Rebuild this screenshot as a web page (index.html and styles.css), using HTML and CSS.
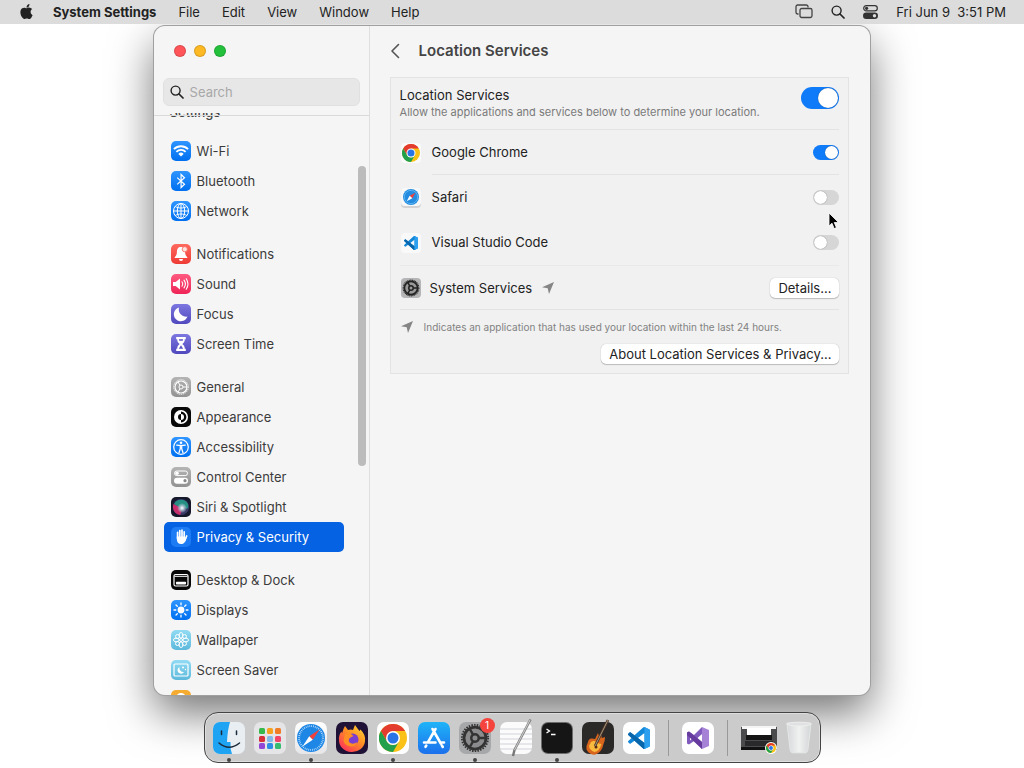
FILE: index.html
```html
<!DOCTYPE html>
<html lang="en">
<head>
<meta charset="utf-8">
<title>System Settings</title>
<link rel="stylesheet" href="styles.css">
</head>
<body>
<svg class="defs" aria-hidden="true">
  <defs>
    <linearGradient id="g-blue" x2="0" y2="1"><stop stop-color="#2f95ff"/><stop offset="1" stop-color="#0070f0"/></linearGradient>
    <linearGradient id="g-red" x2="0" y2="1"><stop stop-color="#ff6a5e"/><stop offset="1" stop-color="#ee3a35"/></linearGradient>
    <linearGradient id="g-pink" x2="0" y2="1"><stop stop-color="#ff5a80"/><stop offset="1" stop-color="#ee2456"/></linearGradient>
    <linearGradient id="g-violet" x2="0" y2="1"><stop stop-color="#7c77e0"/><stop offset="1" stop-color="#5048bd"/></linearGradient>
    <linearGradient id="g-gray" x2="0" y2="1"><stop stop-color="#b4b4b4"/><stop offset="1" stop-color="#929292"/></linearGradient>
    <linearGradient id="g-cyan" x2="0" y2="1"><stop stop-color="#92dbf3"/><stop offset="1" stop-color="#5db9dc"/></linearGradient>
    <linearGradient id="g-white" x2="0" y2="1"><stop stop-color="#ffffff"/><stop offset="1" stop-color="#e6e6e8"/></linearGradient>
    <linearGradient id="g-store" x2="0" y2="1"><stop stop-color="#1fb4f8"/><stop offset="1" stop-color="#1c70ec"/></linearGradient>
    <linearGradient id="g-flame" x1="1" x2="0.2" y2="1"><stop stop-color="#ffe23c"/><stop offset=".45" stop-color="#ff9422"/><stop offset="1" stop-color="#ff2f5b"/></linearGradient>
    <linearGradient id="g-vs" x2="1" y2="0"><stop stop-color="#6b3fa8"/><stop offset="1" stop-color="#b48ae2"/></linearGradient>
    <linearGradient id="g-trash" x2="1" y2="0"><stop stop-color="#d5d8d9"/><stop offset=".5" stop-color="#f0f1f1"/><stop offset="1" stop-color="#d2d5d6"/></linearGradient>
    <radialGradient id="g-siri"><stop stop-color="#ffffff"/><stop offset=".35" stop-color="#b7c8d6"/><stop offset="1" stop-color="#b7c8d6" stop-opacity="0"/></radialGradient>

    <symbol id="chrome" viewBox="0 0 24 24">
      <circle cx="12" cy="12" r="12" fill="#fbc116"/>
      <path d="M12 12 6.8 15 1.6 6A12 12 0 0 1 22.4 6H12Z" fill="#e33b2e"/>
      <path d="M1.6 6 6.8 15a6 6 0 0 0 10.4 0L12 24A12 12 0 0 1 1.6 6Z" fill="#22a04b"/>
      <circle cx="12" cy="12" r="6" fill="#fff"/><circle cx="12" cy="12" r="4.7" fill="#2a74e6"/>
    </symbol>
    <symbol id="compass" viewBox="0 0 24 24">
      <circle cx="12" cy="12" r="12" fill="#1e87e5"/>
      <circle cx="12" cy="12" r="10.2" fill="none" stroke="#d5ecff" stroke-width="1.6" stroke-dasharray=".6 1"/>
      <path d="m19.5 4.5-9 6 3 3Z" fill="#f0403c"/><path d="m4.500 19.500 9-6-3-3Z" fill="#fff"/>
    </symbol>
    <symbol id="compass-small" viewBox="0 0 24 24">
      <circle cx="12" cy="12" r="12" fill="#238ce0"/>
      <circle cx="12" cy="12" r="10" fill="none" stroke="#5bb2ef" stroke-width="1.500"/>
      <path d="m18.500 5.500-8.500 4.500 4 4Z" fill="#f0403c"/><path d="m5.500 18.500 8.500-4.500-4-4Z" fill="#fff"/>
    </symbol>
    <symbol id="vscode" viewBox="0 0 24 24">
      <path fill="#1287d8" d="M23.15 2.587 18.21.21a1.494 1.494 0 0 0-1.705.29l-9.46 8.63-4.12-3.128a.999.999 0 0 0-1.276.057L.327 7.261A1 1 0 0 0 .326 8.74L3.899 12 .326 15.26a1 1 0 0 0 .001 1.479L1.65 17.94a.999.999 0 0 0 1.276.057l4.12-3.128 9.46 8.63a1.492 1.492 0 0 0 1.704.29l4.942-2.377A1.5 1.5 0 0 0 24 20.06V3.939a1.5 1.5 0 0 0-.85-1.352zm-5.146 14.861L10.826 12l7.178-5.448v10.896z"/>
      <path fill="#0865a9" d="m.33 7.260 1.320-1.200a1 1 0 0 1 1.280-.06L18 17.450V24a1.500 1.500 0 0 1-1.500-.5L.33 8.740a1 1 0 0 1 0-1.480Z"/>
      <path fill="#2ca0ee" d="M18 .13 23.150 2.600A1.500 1.500 0 0 1 24 3.940v16.120a1.500 1.500 0 0 1-.85 1.350L18 23.870Z"/>
    </symbol>
    <symbol id="gear" viewBox="0 0 24 24">
      <circle cx="12" cy="12" r="10.500" fill="none" stroke="currentColor" stroke-width="1.500" stroke-dasharray="1.200 1"/>
      <circle cx="12" cy="12" r="8.800" fill="none" stroke="currentColor" stroke-width="2.200"/>
      <circle cx="12" cy="12" r="3" fill="none" stroke="currentColor" stroke-width="2"/>
      <path d="M15 12h6M10.500 9.400l-3-5.200M10.500 14.600l-3 5.200" stroke="currentColor" stroke-width="2"/>
    </symbol>
    <symbol id="arrow" viewBox="0 0 12 12"><path d="M12 0 7 12 5.700 6.300 0 5.200Z" fill="#858585"/></symbol>
    <symbol id="search" viewBox="0 0 14 14"><circle cx="5.600" cy="5.600" r="4.500" fill="none" stroke="currentColor" stroke-width="1.400"/><path d="m9 9 4 4" stroke="currentColor" stroke-width="1.700" stroke-linecap="round"/></symbol>
  </defs>
</svg>

<header class="menubar">
  <nav class="menus" aria-label="Menu bar">
    <button class="menu apple" aria-label="Apple menu"><svg width="15" height="15" viewBox="0 0 24 24"><path fill="#222" d="M12.152 6.896c-.948 0-2.415-1.078-3.960-1.040-2.040.027-3.910 1.183-4.961 3.014-2.117 3.675-.546 9.103 1.519 12.090 1.013 1.454 2.208 3.090 3.792 3.039 1.520-.065 2.090-.987 3.935-.987 1.831 0 2.350.987 3.960.948 1.637-.026 2.676-1.480 3.676-2.948 1.156-1.688 1.636-3.325 1.662-3.415-.039-.013-3.182-1.221-3.220-4.857-.026-3.040 2.480-4.494 2.597-4.559-1.429-2.090-3.623-2.324-4.390-2.376-2-.156-3.675 1.090-4.610 1.090zM15.530 3.830c.843-1.012 1.400-2.427 1.245-3.830-1.207.052-2.662.805-3.532 1.818-.780.896-1.454 2.338-1.273 3.714 1.338.104 2.715-.688 3.559-1.701"/></svg></button>
    <button class="menu app-name">System Settings</button>
    <button class="menu">File</button>
    <button class="menu">Edit</button>
    <button class="menu">View</button>
    <button class="menu">Window</button>
    <button class="menu">Help</button>
  </nav>
  <div class="status">
    <button class="menu" aria-label="Stage Manager"><svg width="18" height="15" viewBox="0 0 18 15" fill="none" stroke="#444" stroke-width="1.300"><path d="M3.500 10H2.700A1.700 1.700 0 0 1 1 8.300V2.700A1.700 1.700 0 0 1 2.700 1h8.600A1.700 1.700 0 0 1 13 2.700v.8"/><rect x="5" y="4.500" width="12" height="9" rx="1.700"/></svg></button>
    <button class="menu" aria-label="Spotlight"><svg width="14" height="14"><use href="#search"/></svg></button>
    <button class="menu" aria-label="Control Center"><svg width="15" height="14" viewBox="0 0 15 14"><rect x=".7" y=".7" width="13.600" height="5.200" rx="2.600" fill="none" stroke="#333" stroke-width="1.200"/><circle cx="3.600" cy="3.300" r="1.600" fill="#333"/><rect y="7.500" width="15" height="6.500" rx="3.250" fill="#333"/><circle cx="11.500" cy="10.750" r="1.700" fill="#ddd"/></svg></button>
    <time class="clock">Fri Jun 9 &nbsp;3:51 PM</time>
  </div>
</header>

<main class="window">
  <aside class="sidebar">
    <div class="lights">
      <button class="light red" aria-label="Close"></button>
      <button class="light yellow" aria-label="Minimize"></button>
      <button class="light green" aria-label="Zoom"></button>
    </div>
    <label class="search"><svg width="14" height="14"><use href="#search"/></svg><input type="search" placeholder="Search" aria-label="Search"></label>
    <nav class="list" aria-label="Settings">
      <div class="list-title">Settings</div>
      <div class="group">
        <a class="item" href="#"><svg class="ico" viewBox="0 0 20 20"><rect width="20" height="20" rx="5" fill="url(#g-blue)"/><g fill="none" stroke="#fff" stroke-width="1.800"><path d="M2.900 8.200a10 10 0 0 1 14.200 0M5.400 10.800a6.500 6.500 0 0 1 9.200 0"/></g><path d="M7.400 12.900a3.700 3.700 0 0 1 5.200 0L10 15.600Z" fill="#fff"/></svg>Wi-Fi</a>
        <a class="item" href="#"><svg class="ico" viewBox="0 0 20 20"><rect width="20" height="20" rx="5" fill="url(#g-blue)"/><path d="m6.200 6.600 7.300 6.700-3.400 3.200v-13l3.400 3.200-7.300 6.700" fill="none" stroke="#fff" stroke-width="1.200"/></svg>Bluetooth</a>
        <a class="item" href="#"><svg class="ico" viewBox="0 0 20 20"><rect width="20" height="20" rx="5" fill="url(#g-blue)"/><g fill="none" stroke="#fff"><circle cx="10" cy="10" r="7.500"/><ellipse cx="10" cy="10" rx="3.700" ry="7.500"/><path d="M2.500 10h15M10 2.500v15M4.200 5.500c3 2 8.600 2 11.600 0M4.200 14.500c3-2 8.600-2 11.600 0"/></g></svg>Network</a>
      </div>
      <div class="group">
        <a class="item" href="#"><svg class="ico" viewBox="0 0 20 20"><rect width="20" height="20" rx="5" fill="url(#g-red)"/><path d="M10 3c-3 0-4 2-4.100 5-.1 3-.9 3.800-2.200 5.200v.8h12.600v-.8C15 11.800 14.200 11 14.100 8 14 5 13 3 10 3ZM8 15h4a2 2 0 0 1-4 0Z" fill="#fff"/><circle cx="13.800" cy="5.200" r="2.600" fill="#ffe3df" stroke="#fa6258" stroke-width=".8"/></svg>Notifications</a>
        <a class="item" href="#"><svg class="ico" viewBox="0 0 20 20"><rect width="20" height="20" rx="5" fill="url(#g-pink)"/><path d="M2 8h2.700L9 4.500v11L4.700 12H2Z" fill="#fff"/><path d="M11 7.800q1.600 2.200 0 4.400M13 6.200q2.800 3.800 0 7.600M15.200 4.700q3.600 5.300 0 10.600" fill="none" stroke="#fff" stroke-width="1.100" stroke-linecap="round"/></svg>Sound</a>
        <a class="item" href="#"><svg class="ico" viewBox="0 0 20 20"><rect width="20" height="20" rx="5" fill="url(#g-violet)"/><path d="M8 3.500a7.300 7.300 0 0 0 8.500 9A7 7 0 1 1 8 3.500Z" fill="#fff"/></svg>Focus</a>
        <a class="item" href="#"><svg class="ico" viewBox="0 0 20 20"><rect width="20" height="20" rx="5" fill="url(#g-violet)"/><path d="M5.200 3h9.600v2.200h-1c0 2.500-.8 3.300-2.500 4.800 1.700 1.500 2.500 2.300 2.500 4.800h1V17H5.200v-2.200h1c0-2.500.8-3.300 2.500-4.800-1.700-1.500-2.500-2.300-2.500-4.800h-1Z" fill="#fff"/><path d="M7.800 5.200h4.400l-.5 1.500H8.300ZM10 11.200l2.200 3.600H7.800Z" fill="#5c55c6"/></svg>Screen Time</a>
      </div>
      <div class="group">
        <a class="item" href="#"><svg class="ico" viewBox="0 0 20 20"><rect width="20" height="20" rx="5" fill="url(#g-gray)"/><g fill="none" stroke="#fff"><circle cx="10" cy="10" r="7.300" stroke-dasharray="1.200 .9"/><circle cx="10" cy="10" r="6" stroke-width="1.200"/><circle cx="10" cy="10" r="2"/><path d="M12 10h4M9 8.300 7 4.800M9 11.700l-2 3.500"/></g></svg>General</a>
        <a class="item" href="#"><svg class="ico" viewBox="0 0 20 20"><rect width="20" height="20" rx="5" fill="#080808"/><circle cx="10" cy="10" r="7" fill="#fff"/><path d="M10 4.600a5.400 5.400 0 0 1 0 10.800v-2.400a3 3 0 0 1 0-6Z" fill="#080808"/><path d="M10 7a3 3 0 0 1 0 6Z" fill="#fff"/></svg>Appearance</a>
        <a class="item" href="#"><svg class="ico" viewBox="0 0 20 20"><rect width="20" height="20" rx="5" fill="url(#g-blue)"/><circle cx="10" cy="10" r="7.300" fill="none" stroke="#fff" stroke-width="1.200"/><circle cx="10" cy="5.700" r="1.300" fill="#fff"/><path d="M5.700 8.200 10 8.700l4.300-.5M9.300 8.500v3.200l-1.300 4M10.700 8.500v3.200l1.300 4" fill="none" stroke="#fff" stroke-width="1.300" stroke-linecap="round"/></svg>Accessibility</a>
        <a class="item" href="#"><svg class="ico" viewBox="0 0 20 20"><rect width="20" height="20" rx="5" fill="url(#g-gray)"/><rect x="3.500" y="4" width="13" height="4.600" rx="2.300" fill="none" stroke="#fff"/><circle cx="6" cy="6.300" r="1.800" fill="#fff"/><rect x="3" y="10.700" width="14" height="6" rx="3" fill="#fff"/><circle cx="14" cy="13.700" r="1.600" fill="#888"/></svg>Control Center</a>
        <a class="item" href="#"><svg class="ico" viewBox="0 0 20 20"><rect width="20" height="20" rx="5" fill="#14182a"/><circle cx="10" cy="10" r="8" fill="#393a68"/><path d="M3 7a8 8 0 0 1 14 0q1 3-1 5-3-3-9-2Z" fill="#258f84"/><path d="M2.500 7A8 8 0 0 0 9 18q3-4-1-8Z" fill="#c62e6c"/><circle cx="11" cy="11" r="5" fill="url(#g-siri)"/></svg>Siri &amp; Spotlight</a>
        <a class="item selected" href="#" aria-current="page"><svg class="ico" viewBox="0 0 20 20"><rect width="20" height="20" rx="5" fill="#1d7cf3"/><g stroke="#fff" stroke-width="1.700" stroke-linecap="round"><path d="M6.600 5.300v6M8.800 3.500v7M11 3.200v7M13.200 4.800v7M15.700 9l-2 4.500"/></g><path d="M5.800 9.500h8.200v2l1.500-.5c-1 3.500-2 6-5.200 6-3 0-4.500-2-4.500-5Z" fill="#fff"/></svg>Privacy &amp; Security</a>
      </div>
      <div class="group">
        <a class="item" href="#"><svg class="ico" viewBox="0 0 20 20"><rect width="20" height="20" rx="5" fill="#080808"/><rect x="3" y="4.500" width="14" height="11.500" rx="1.500" fill="none" stroke="#fff" stroke-width="1.200"/><path d="M3.500 6.300h13" stroke="#fff"/><rect x="5" y="11.700" width="10" height="2.800" rx=".7" fill="#fff"/></svg>Desktop &amp; Dock</a>
        <a class="item" href="#"><svg class="ico" viewBox="0 0 20 20"><rect width="20" height="20" rx="5" fill="url(#g-blue)"/><circle cx="10" cy="10" r="3.400" fill="#fff"/><path d="M10 3v1.800M10 15.200V17M3 10h1.800M15.200 10H17M5 5l1.300 1.300M13.700 13.700 15 15M5 15l1.300-1.300M13.700 6.300 15 5" stroke="#fff" stroke-width="1.300" stroke-linecap="round"/></svg>Displays</a>
        <a class="item" href="#"><svg class="ico" viewBox="0 0 20 20"><rect width="20" height="20" rx="5" fill="url(#g-cyan)"/><g fill="none" stroke="#fff"><circle cx="10" cy="10" r="1.500"/><ellipse cx="10" cy="5.300" rx="1.900" ry="2.800"/><ellipse cx="10" cy="14.700" rx="1.900" ry="2.800"/><ellipse cx="5.300" cy="10" rx="2.800" ry="1.900"/><ellipse cx="14.700" cy="10" rx="2.800" ry="1.900"/><circle cx="6.500" cy="6.500" r="2"/><circle cx="13.500" cy="6.500" r="2"/><circle cx="6.500" cy="13.500" r="2"/><circle cx="13.500" cy="13.500" r="2"/></g></svg>Wallpaper</a>
        <a class="item" href="#"><svg class="ico" viewBox="0 0 20 20"><rect width="20" height="20" rx="5" fill="url(#g-cyan)"/><rect x="3" y="4" width="14" height="12" rx="1" fill="none" stroke="#fff" stroke-width="1.200"/><path d="M8.500 7a4 4 0 0 0 4.500 5A3.500 3.500 0 1 1 8.500 7Z" fill="#fff"/><circle cx="12" cy="7.500" r="1" fill="#fff"/><circle cx="14.500" cy="9.500" r=".7" fill="#fff"/></svg>Screen Saver</a>
        <a class="item" href="#" aria-label="Battery"><svg class="ico" viewBox="0 0 20 20"><rect width="20" height="20" rx="5" fill="#f5ac30"/><circle cx="10" cy="8" r="5" fill="#fff"/></svg></a>
      </div>
      <div class="scrollbar"></div>
    </nav>
  </aside>

  <section class="content">
    <header class="title-row">
      <button class="back" aria-label="Back"><svg width="10" height="16" viewBox="0 0 10 16" fill="none" stroke="#555" stroke-width="1.600" stroke-linecap="round" stroke-linejoin="round"><path d="M8.500 1.500 2 8 8.500 14.500"/></svg></button>
      <h1>Location Services</h1>
    </header>
    <div class="card">
      <div class="row intro">
        <label class="grow" for="loc"><span class="name">Location Services</span><span class="note">Allow the applications and services below to determine your location.</span></label>
        <input class="switch large" type="checkbox" role="switch" id="loc" checked>
      </div>
      <div class="row">
        <svg class="app" viewBox="0 0 22 22"><rect x="1" y="1" width="20" height="20" rx="4" fill="#fafafa"/><use href="#chrome" x="2" y="2" width="18" height="18"/></svg>
        <label class="grow inset" for="chrome-sw">Google Chrome</label>
        <input class="switch" type="checkbox" role="switch" id="chrome-sw" checked>
      </div>
      <div class="row">
        <svg class="app" viewBox="0 0 22 22"><rect x="1" y="2" width="20" height="19" rx="4" fill="#d3d3d5"/><rect x="1" y="1" width="20" height="18" rx="4" fill="#f8f8f8"/><use href="#compass-small" x="3" y="2" width="16" height="16"/></svg>
        <label class="grow" for="safari-sw">Safari</label>
        <input class="switch" type="checkbox" role="switch" id="safari-sw">
        <svg class="cursor" width="11" height="18" viewBox="0 0 11 18" aria-hidden="true"><path d="M1 1v13l3-2.800L6.200 16.600l2.200-1L6.200 10.500h4.300Z" fill="#000" stroke="#fff" stroke-width=".8"/></svg>
      </div>
      <div class="row">
        <svg class="app" viewBox="0 0 22 22"><rect x="1" y="1" width="20" height="20" rx="4" fill="#f9f9f9"/><use href="#vscode" x="4" y="4" width="14" height="14"/></svg>
        <label class="grow" for="code-sw">Visual Studio Code</label>
        <input class="switch" type="checkbox" role="switch" id="code-sw">
      </div>
      <div class="row services">
        <svg class="app" viewBox="0 0 22 22" color="#222"><rect x="1" y="1" width="20" height="20" rx="4" fill="#b5b5b7"/><circle cx="11" cy="11" r="8" fill="#999"/><use href="#gear" x="2" y="2" width="18" height="18"/></svg>
        <span>System Services</span>
        <svg class="arrow" width="12" height="12"><use href="#arrow"/></svg>
        <button class="push">Details...</button>
      </div>
      <div class="legend">
        <svg width="12" height="12"><use href="#arrow"/></svg>
        <span>Indicates an application that has used your location within the last 24 hours.</span>
      </div>
      <div class="actions"><button class="push">About Location Services &amp; Privacy...</button></div>
    </div>
  </section>
</main>

<footer class="dock">
  <button class="dock-item running" aria-label="Finder"><svg width="32" height="32" viewBox="0 0 32 32"><rect width="32" height="32" rx="7" fill="#e9eef3"/><path d="M17 0H7a7 7 0 0 0-7 7v18a7 7 0 0 0 7 7h12q-2-5-1.500-12H14Q14.500 8 17 0Z" fill="#1fa3f3"/><path d="M8.500 9v3.500M23.500 9v3.500M6 21q10 8.500 20.500 0" fill="none" stroke="#1b2a3a" stroke-width="1.500" stroke-linecap="round"/></svg></button>
  <button class="dock-item" aria-label="Launchpad"><svg width="32" height="32" viewBox="0 0 32 32"><rect width="32" height="32" rx="7" fill="#e5e5e7"/><rect x="5" y="6" width="6" height="6" rx="1.500" fill="#36b94a"/><rect x="13" y="6" width="6" height="6" rx="1.500" fill="#f5a11d"/><rect x="21" y="6" width="6" height="6" rx="1.500" fill="#f07c26"/><rect x="5" y="14" width="6" height="6" rx="1.500" fill="#d82f39"/><rect x="13" y="14" width="6" height="6" rx="1.500" fill="#84b8e6"/><rect x="21" y="14" width="6" height="6" rx="1.500" fill="#f14467"/><rect x="5" y="21" width="6" height="6" rx="1.500" fill="#9146d5"/><rect x="13" y="21" width="6" height="6" rx="1.500" fill="#2e8ee6"/><rect x="21" y="21" width="6" height="6" rx="1.500" fill="#35bc70"/></svg></button>
  <button class="dock-item running" aria-label="Safari"><svg width="32" height="32" viewBox="0 0 32 32"><rect width="32" height="32" rx="7" fill="url(#g-white)"/><use href="#compass" x="2" y="2" width="28" height="28"/></svg></button>
  <button class="dock-item" aria-label="Firefox"><svg width="32" height="32" viewBox="0 0 32 32"><rect width="32" height="32" rx="7" fill="#201236"/><path d="M9 4l3 4q3-1 5 0l2-5q2 3 4.500 6l1-1.500Q30 13 29 19a13 11.500 0 0 1-26-1q-.5-5 2.500-8.500l.5 2Q7 7 9 4Z" fill="url(#g-flame)"/><circle cx="16.500" cy="17.500" r="6" fill="#7a3ed1"/><path d="M9 12q5-2 8.500 2l-3 1.500q-3 2-1 5 3 2.500 8-.5-2 5-7 4.500-6-1-7-6Z" fill="#ff8f24"/></svg></button>
  <button class="dock-item running" aria-label="Google Chrome"><svg width="32" height="32" viewBox="0 0 32 32"><rect width="32" height="32" rx="7" fill="#fff"/><use href="#chrome" x="2" y="2" width="28" height="28"/></svg></button>
  <button class="dock-item" aria-label="App Store"><svg width="32" height="32" viewBox="0 0 32 32"><rect width="32" height="32" rx="7" fill="url(#g-store)"/><g stroke="#fff" stroke-width="2.600" stroke-linecap="round"><path d="M14.500 7 22.800 21.500M17.500 7 10 20.200M6 20.500h11.500M22.500 20.500H26M8.300 23.500l-.8 1.300M23.800 23.300l1 1.700"/></g></svg></button>
  <button class="dock-item running" aria-label="System Settings, 1 notification"><svg width="32" height="32" viewBox="0 0 32 32" color="#333"><rect width="32" height="32" rx="7" fill="#a7a8aa"/><circle cx="16" cy="16" r="12" fill="#8b8b8d"/><use href="#gear" x="1" y="1" width="30" height="30"/></svg><span class="badge">1</span></button>
  <button class="dock-item" aria-label="TextEdit"><svg width="32" height="32" viewBox="0 0 32 32" overflow="visible"><rect width="32" height="32" rx="7" fill="#fbfbfb"/><path d="M0 7h32M0 12h32M0 17h32M0 22h32M0 27h32" stroke="#cfd3d8"/><path d="M30.500-2.500 14.500 28 13 34" fill="none" stroke="#777" stroke-width="2.400"/><path d="M30-2 14.500 28" stroke="#c4c4c4" stroke-width="1.200"/></svg></button>
  <button class="dock-item running" aria-label="Terminal"><svg width="32" height="32" viewBox="0 0 32 32"><rect width="32" height="32" rx="7" fill="#6b6b6b"/><rect x="1" y="1" width="30" height="30" rx="6" fill="#151515"/><path d="m5.500 7 3 2-3 2M10 12.500h4.500" fill="none" stroke="#fff" stroke-width="1.300"/></svg></button>
  <button class="dock-item" aria-label="GarageBand"><svg width="32" height="32" viewBox="0 0 32 32" overflow="visible"><rect width="32" height="32" rx="7" fill="#2b2928"/><path d="M6 20q1-4 4-3.500l3 .5 3-6 1 3 3-3q-1 4 0 5l3-1q0 4-1.500 7-1.500 8-8 10.500-6 1-9-5-.5-4 1.500-7.500Z" fill="#d9641c"/><path d="M9 20q3-2 5.500 0t5 2q-2 7-7 8-5-2-5.500-6Z" fill="#f8bb3d"/><circle cx="14" cy="25" r="1.500" fill="#5b270f"/><path d="M26-2 13 24" stroke="#4a3325" stroke-width="2.600"/><path d="M26-2 13 24" stroke="#a99780"/></svg></button>
  <button class="dock-item" aria-label="Visual Studio Code"><svg width="32" height="32" viewBox="0 0 32 32"><rect width="32" height="32" rx="7" fill="#fff"/><use href="#vscode" x="5" y="5" width="22" height="22"/></svg></button>
  <span class="dock-sep"></span>
  <button class="dock-item" aria-label="Visual Studio"><svg width="32" height="32" viewBox="0 0 32 32"><rect width="32" height="32" rx="7" fill="#fff"/><path d="M7 9.500 5 10.500v11l2 1 5-3.500 8 8V20l-4.500-4L20 12V5l-8 8Zm1 4 2.500 2.500L8 18.500Z" fill="#8059bd" fill-rule="evenodd"/><path d="m5 10.500 2-1 13 10.500v7L5 13Z" fill="#673b9e"/><path d="m20 5 7 3v16l-7 3Z" fill="#a682d6"/></svg></button>
  <span class="dock-sep"></span>
  <button class="dock-item" aria-label="Minimized Chrome window"><svg width="36" height="32" viewBox="0 0 36 32"><path d="M0 5h36v23H0Z" fill="#4b4b4d"/><path d="M1 4h34v3H1Z" fill="#f5f5f5"/><path d="M6 6h24v7H6Z" fill="#fff"/><path d="M5 13h26v5H5Z" fill="#151515"/><path d="M4 19h28v5H4Z" fill="#29292b"/><path d="M0 25h36v3H0Z" fill="#111"/><circle cx="30" cy="26" r="6" fill="#fff"/><use href="#chrome" x="25" y="21" width="10" height="10"/></svg></button>
  <button class="dock-item" aria-label="Trash"><svg width="26" height="36" viewBox="0 0 28 36"><path d="M1 2h26l-3.500 29q-.5 3-3 3h-13q-2.500 0-3-3Z" fill="url(#g-trash)" stroke="#e6e8e8"/><ellipse cx="14" cy="3" rx="13" ry="2" fill="#dfe1e2" stroke="#eee"/></svg></button>
</footer>
</body>
</html>
```
FILE: styles.css
```css
* { box-sizing: border-box; }

body {
  margin: 0;
  height: 100vh;
  display: flex;
  flex-direction: column;
  align-items: center;
  overflow: hidden;
  background: #fff;
  color: #222;
  font: 13px/16px Inter, "Liberation Sans", sans-serif;
}

button, input { font: inherit; color: inherit; }
button { margin: 0; padding: 0; border: 0; background: none; }
svg { display: block; flex: none; }
.defs { position: absolute; width: 0; height: 0; }

/* Menu bar */
.menubar {
  z-index: 1;
  flex: none;
  align-self: stretch;
  height: 24px;
  padding: 0 18px 1px 19px;
  display: flex;
  align-items: center;
  justify-content: space-between;
  background: #dcdcdc;
}
.menus { display: flex; align-items: center; gap: 22px; }
.apple { margin-right: -3px; }
.app-name { font-weight: 700; }
.status { display: flex; align-items: center; gap: 18px; }

/* Window */
.window {
  flex: 1;
  min-height: 0;
  width: 70%;
  margin-top: 2px;
  display: flex;
  overflow: hidden;
  border-radius: 11px;
  background: #f5f5f5;
  box-shadow: 0 0 0 1px #a0a0a0, 0 18px 44px rgba(0, 0, 0, .55);
}

/* Sidebar */
.sidebar {
  flex: none;
  width: 216px;
  display: flex;
  flex-direction: column;
  border-right: 1px solid #dedede;
}
.lights { display: flex; gap: 8px; padding: 19px 20px 21px; }
.light { width: 12px; height: 12px; border-radius: 50%; border: 1px solid rgba(0, 0, 0, .15); }
.red { background: #ff5458; }
.yellow { background: #fdb924; }
.green { background: #23c13b; }
.search {
  flex: none;
  height: 28px;
  margin: 0 9px 7px;
  padding: 0 6px;
  display: flex;
  align-items: center;
  gap: 6px;
  border: 1px solid #e0e0e0;
  border-radius: 6px;
  background: #e7e7e7;
}
.search input {
  flex: 1;
  min-width: 0;
  padding: 0;
  border: 0;
  outline: 0;
  background: none;
}
.search input::placeholder { color: #a8a8a8; opacity: 1; }
.list {
  position: relative;
  flex: 1;
  min-height: 0;
  padding: 0 25px 0 10px;
  overflow: hidden;
}
.list::before {
  content: "";
  position: absolute;
  top: 2px;
  left: 0;
  right: 0;
  border-top: 1px solid #dadada;
}
.list-title { margin: -9px 6px 16px; font-weight: 500; color: #444; }
.group { margin-bottom: 13px; }
.item {
  height: 30px;
  padding: 0 7px;
  display: flex;
  align-items: center;
  gap: 6px;
  border-radius: 5px;
  color: #3b3b3b;
  text-decoration: none;
}
.item.selected { background: #0562e2; color: #fff; }
.ico { width: 20px; height: 20px; }
.scrollbar {
  position: absolute;
  top: 53px;
  right: 3px;
  width: 8px;
  height: 300px;
  border-radius: 4px;
  background: #bcbcbc;
}

/* Content pane */
.content { flex: 1; min-width: 0; padding: 0 21px 0 20px; }
.title-row {
  height: 51px;
  padding-bottom: 1px;
  display: flex;
  align-items: center;
  gap: 19px;
}
h1 { margin: 0; font-size: 15px; line-height: 20px; font-weight: 600; color: #444; }
.card {
  padding: 0 9px 9px;
  border: 1px solid #e3e3e3;
  background: #f1f1f1;
}
.row {
  position: relative;
  height: 45px;
  display: flex;
  align-items: center;
  gap: 10px;
}
.row.intro { height: 52px; padding-bottom: 12px; border-bottom: 1px solid #e3e3e3; }
.row.services { border-top: 1px solid #e9e9e9; border-bottom: 1px solid #e3e3e3; gap: 8px; }
.app { width: 22px; height: 22px; }
.grow { flex: 1; padding-bottom: 1px; }
.inset { height: 45px; line-height: 44px; border-bottom: 1px solid #e3e3e3; margin-right: -36px; }
.name { display: block; padding-top: 12px; line-height: 18px; }
.note { display: block; font-size: 11px; color: #7a7a7a; }
.arrow { margin-left: 2px; }

.switch {
  appearance: none;
  flex: none;
  position: relative;
  width: 26px;
  height: 15px;
  margin: 0;
  border-radius: 10px;
  background: #d6d6d6;
}
.switch::before {
  content: "";
  position: absolute;
  top: 1px;
  left: 1px;
  height: 13px;
  width: 13px;
  border-radius: 50%;
  background: #fff;
  box-shadow: 0 0 1px rgba(0, 0, 0, .5);
}
.switch:checked { background: #0f7bf8; }
.switch:checked::before { left: auto; right: 1px; }
.switch.large { width: 38px; height: 22px; border-radius: 11px; }
.switch.large::before { width: 20px; height: 20px; }
.cursor { position: absolute; top: 37px; right: 0; z-index: 1; }

.push {
  height: 20px;
  margin-left: auto;
  padding: 0 8px;
  border-radius: 5px;
  background: #fff;
  box-shadow: 0 0 1px rgba(0, 0, 0, .3), 0 1px 1px rgba(0, 0, 0, .2);
}
.legend {
  height: 34px;
  display: flex;
  align-items: center;
  gap: 11px;
  padding-left: 1px;
  font-size: 10px;
  color: #828282;
}
.actions { display: flex; }

/* Dock */
.dock {
  z-index: 1;
  flex: none;
  height: 51px;
  margin: 17px 0 5px;
  padding: 0 8px;
  display: flex;
  align-items: center;
  gap: 9px;
  border: 1px solid #444;
  border-radius: 14px;
  background: #cbcbcb;
  box-shadow: inset 0 0 0 1px #dedede;
}
.dock-item { position: relative; }
.dock-sep { width: 1px; height: 36px; margin: 0 4px; background: #999; }
.running::after {
  content: "";
  position: absolute;
  bottom: -8px;
  left: 14px;
  width: 4px;
  height: 4px;
  border-radius: 50%;
  background: #444;
}
.badge {
  position: absolute;
  top: -4px;
  right: -4px;
  width: 15px;
  height: 15px;
  border-radius: 50%;
  background: #f5443d;
  color: #fff;
  font-size: 10px;
  line-height: 15px;
}
```
